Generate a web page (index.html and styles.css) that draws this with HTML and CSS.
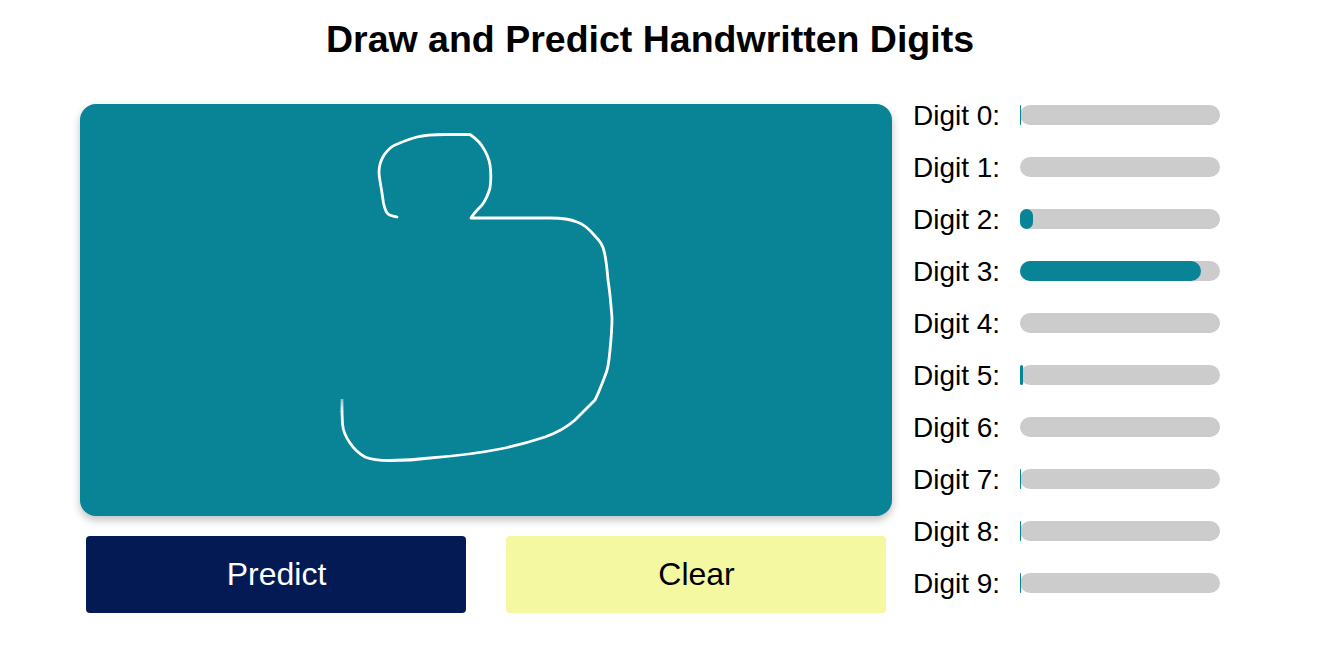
FILE: index.html
```html
<!DOCTYPE html>
<html lang="en">
<head>
<meta charset="utf-8">
<title>Draw and Predict Handwritten Digits</title>
<link rel="stylesheet" href="styles.css">
</head>
<body>
<div class="page">
  <h1 class="title">Draw and Predict Handwritten Digits</h1>
  <div class="main">
    <section class="drawing">
      <svg class="canvas" width="812" height="412" viewBox="80 104 812 412" aria-label="Drawing canvas">
        <defs>
          <linearGradient id="fade" gradientUnits="userSpaceOnUse" x1="342" y1="399" x2="342" y2="412">
            <stop offset="0" stop-color="#fff" stop-opacity=".5"/>
            <stop offset="1" stop-color="#fff"/>
          </linearGradient>
        </defs>
        <path class="stroke" d="M397 217C393 216 390 216 388 214C385 211 384.500 207 383.500 203C382.500 197 382 192 381 187C380 181 379 176 379 172C379 165 381 160 384 155C387 151 390 147 395 145C402 142 409 139 417 137C425 135 435 134.500 445 134.500L470 134.500C475 138 479 141 482 146C486 152 489 158 490 165C491 172 491 181 490 188C488 195 485 201 482 205C478 209 474 213 471 218L516 218L550 218C560 218 570 219 577 222C584 224 589 229 595 236C600 241 603 245 604 251C606 258 607 268 608 280C610 292 611 305 612 318C612 330 611 340 610 350C609 362 608 370 605 376C602 384 599 392 595 400C590 405 583 412 575 420C566 428 556 433 545 437C530 442 515 446 500 449C480 453 455 456 430 458C415 460 400 460.500 390 460.500C380 460.500 372 460 365 457C358 453 354 449 350 443C345 436 343 430 342.500 424L342 412"/>
        <line class="stroke-end" x1="342" y1="412" x2="342" y2="399"/>
      </svg>
      <div class="actions">
        <button class="btn btn-predict" type="button">Predict</button>
        <button class="btn btn-clear" type="button">Clear</button>
      </div>
    </section>
    <section class="scores">
      <div class="row"><span class="label">Digit 0:</span><div class="track"><div class="fill" style="width:1px"></div></div></div>
      <div class="row"><span class="label">Digit 1:</span><div class="track"><div class="fill" style="width:0"></div></div></div>
      <div class="row"><span class="label">Digit 2:</span><div class="track"><div class="fill" style="width:13px"></div></div></div>
      <div class="row"><span class="label">Digit 3:</span><div class="track"><div class="fill" style="width:181px"></div></div></div>
      <div class="row"><span class="label">Digit 4:</span><div class="track"><div class="fill" style="width:0"></div></div></div>
      <div class="row"><span class="label">Digit 5:</span><div class="track"><div class="fill" style="width:3px"></div></div></div>
      <div class="row"><span class="label">Digit 6:</span><div class="track"><div class="fill" style="width:0"></div></div></div>
      <div class="row"><span class="label">Digit 7:</span><div class="track"><div class="fill" style="width:1px"></div></div></div>
      <div class="row"><span class="label">Digit 8:</span><div class="track"><div class="fill" style="width:1px"></div></div></div>
      <div class="row"><span class="label">Digit 9:</span><div class="track"><div class="fill" style="width:1px"></div></div></div>
    </section>
  </div>
</div>
</body>
</html>
```
FILE: styles.css
```css
* { box-sizing: border-box; }
html, body { margin: 0; padding: 0; background: #fff; }
body { font-family: "Liberation Sans", Arial, sans-serif; color: #000; overflow: hidden; }
.page { width: 1300px; height: 662px; }
.title { margin: 0; padding-top: 18px; height: 104px; font-size: 37.5px; line-height: 43px; font-weight: 700; text-align: center; }
.main { display: flex; gap: 21px; padding-left: 80px; }
.drawing { width: 812px; display: flex; flex-direction: column; }
.canvas { display: block; width: 812px; height: 412px; background: #098396; border-radius: 16px; box-shadow: 0 4px 8px rgba(0,0,0,.25); }
.stroke { fill: none; stroke: #fff; stroke-width: 2.8; stroke-linejoin: round; stroke-linecap: round; }
.stroke-end { stroke: url(#fade); stroke-width: 2.8; }
.actions { display: flex; justify-content: center; gap: 40px; margin-top: 20px; }
.btn { width: 380px; height: 77px; border: 0; border-radius: 4px; font-family: inherit; font-size: 32px; padding: 0 0 1px 1px; }
.btn-predict { background: #041a55; color: #fff; }
.btn-clear { background: #f3f8a1; color: #000; }
.scores { display: flex; flex-direction: column; gap: 32px; padding-top: 1px; }
.row { display: flex; align-items: center; height: 20px; }
.label { width: 107px; font-size: 28px; line-height: 20px; padding-top: 2px; white-space: nowrap; }
.track { width: 200px; height: 20px; background: #ccc; border-radius: 10px; }
.fill { height: 100%; background: #098396; border-radius: 10px; }
```
